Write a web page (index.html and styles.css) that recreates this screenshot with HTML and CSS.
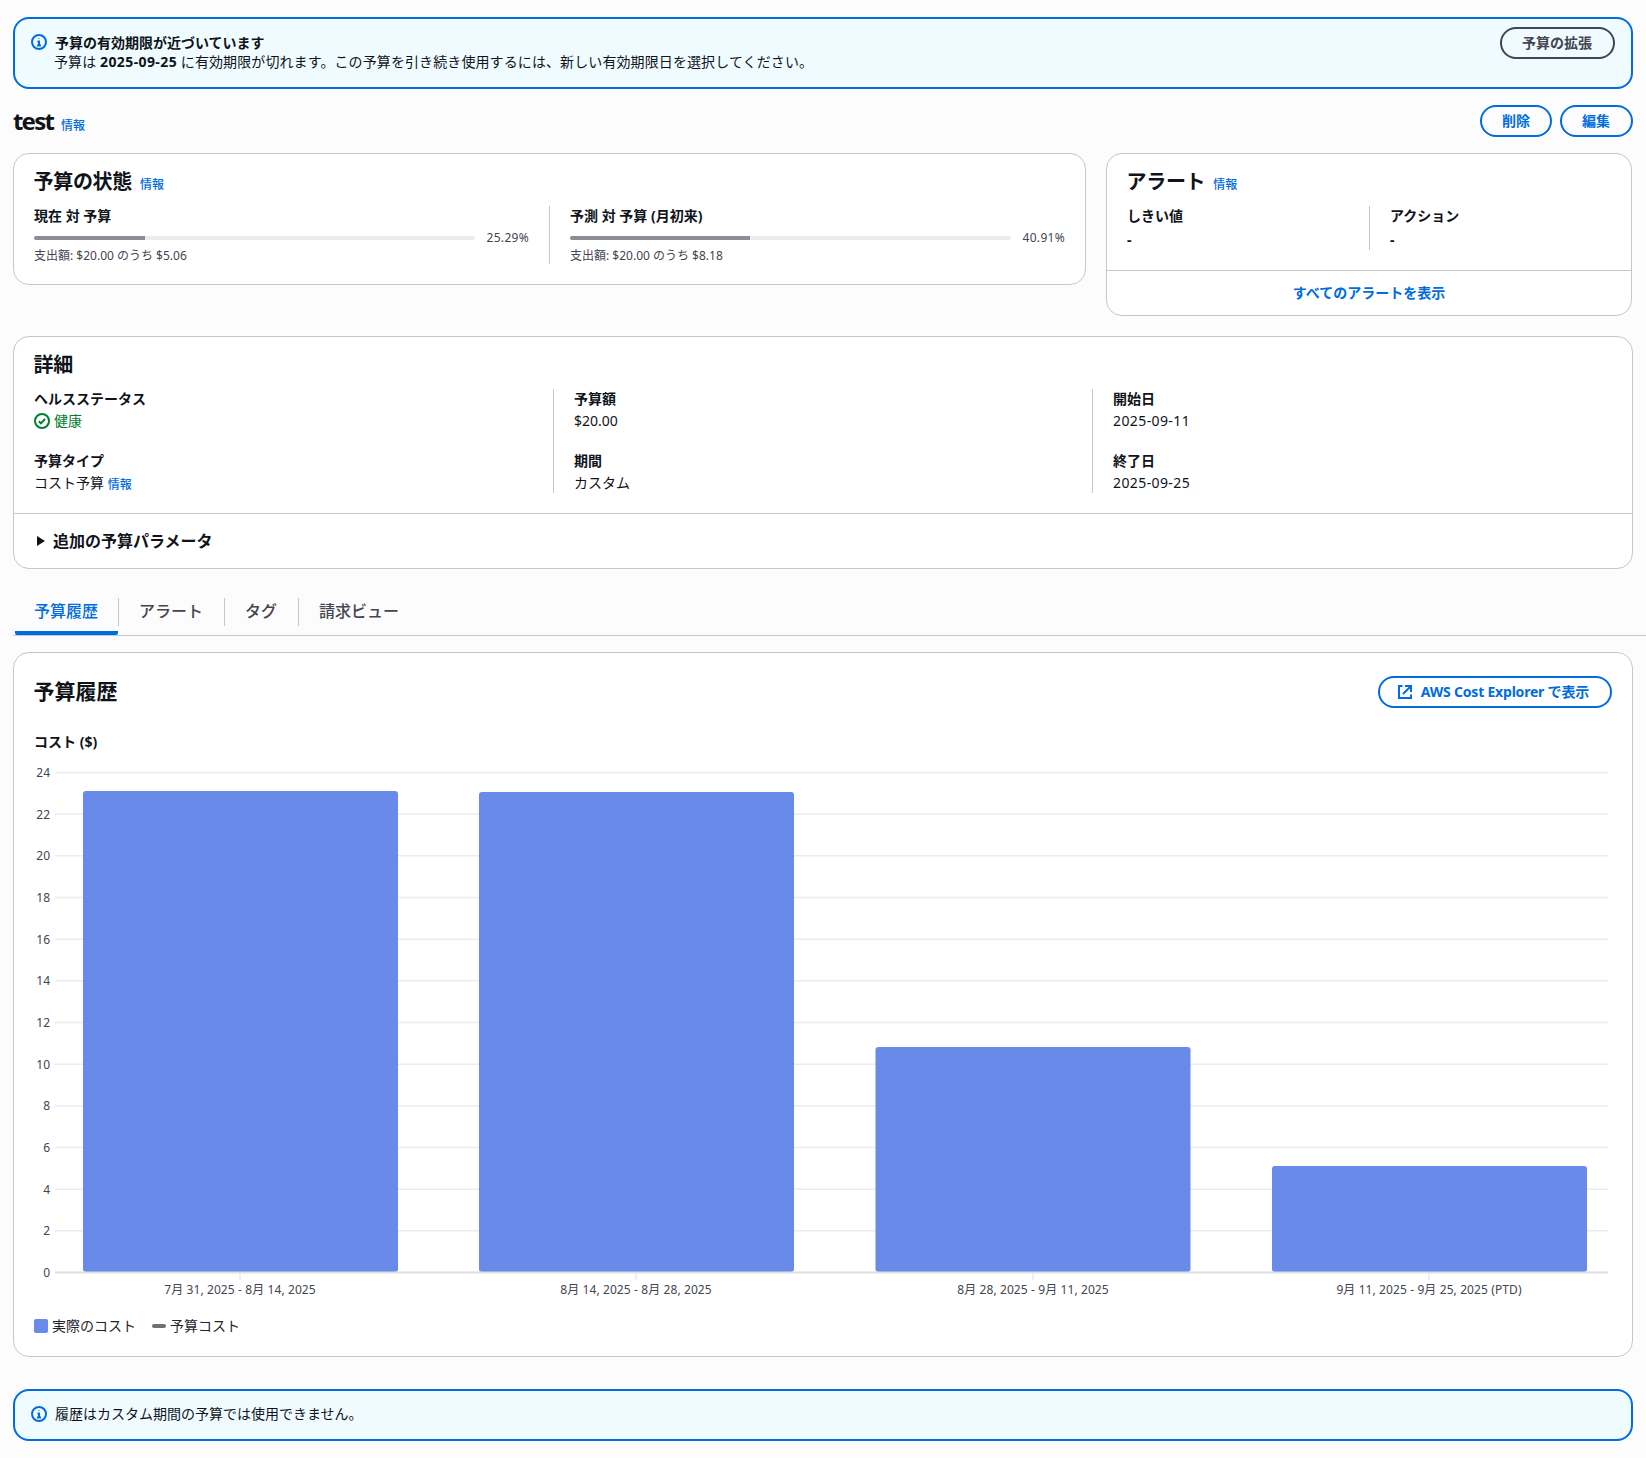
FILE: index.html
```html
<!DOCTYPE html>
<html lang="ja">
<head>
<meta charset="utf-8">
<title>test</title>
<link rel="stylesheet" href="styles.css">
</head>
<body>
<main class="page">
  <section class="flash">
    <svg class="icon flash-icon" viewBox="0 0 16 16"><circle cx="8" cy="8" r="7"/><path d="M8 11.5V7.5H6.5"/><path d="M6 11.5h4"/><path d="M8 4.4v.6"/></svg>
    <div class="flash-body">
      <div class="flash-title">予算の有効期限が近づいています</div>
      <div class="flash-text">予算は <b>2025-09-25</b> に有効期限が切れます。この予算を引き続き使用するには、新しい有効期限日を選択してください。</div>
    </div>
    <button class="btn btn-dark">予算の拡張</button>
  </section>

  <header class="page-head">
    <div class="title-wrap"><h1>test</h1><a class="info">情報</a></div>
    <div class="actions"><button class="btn">削除</button><button class="btn">編集</button></div>
  </header>

  <div class="top-grid">
    <section class="card status-card">
      <div class="title-wrap"><h2>予算の状態</h2><a class="info">情報</a></div>
      <div class="status-cols">
        <div class="status-col">
          <div class="label">現在 対 予算</div>
          <div class="progress-row"><div class="track"><div class="fill" style="width:25.29%"></div></div><span class="pct">25.29%</span></div>
          <div class="sub">支出額: $20.00 のうち $5.06</div>
        </div>
        <div class="status-col ruled">
          <div class="label">予測 対 予算 (月初来)</div>
          <div class="progress-row"><div class="track"><div class="fill" style="width:40.91%"></div></div><span class="pct">40.91%</span></div>
          <div class="sub">支出額: $20.00 のうち $8.18</div>
        </div>
      </div>
    </section>

    <section class="card alert-card">
      <div class="alert-main">
        <div class="title-wrap"><h2>アラート</h2><a class="info">情報</a></div>
        <div class="alert-cols">
          <div class="alert-col"><div class="label">しきい値</div><div class="dash">-</div></div>
          <div class="alert-col ruled"><div class="label">アクション</div><div class="dash">-</div></div>
        </div>
      </div>
      <a class="alert-foot">すべてのアラートを表示</a>
    </section>
  </div>

  <section class="card details">
    <div class="details-main">
      <h2>詳細</h2>
      <div class="details-cols">
        <div class="details-col">
          <div class="field"><div class="label">ヘルスステータス</div><div class="value ok"><svg class="icon" viewBox="0 0 16 16"><circle cx="8" cy="8" r="7"/><path d="m4.8 8.2 2.2 2.2 4-4.4"/></svg>健康</div></div>
          <div class="field"><div class="label">予算タイプ</div><div class="value">コスト予算 <a class="info">情報</a></div></div>
        </div>
        <div class="details-col ruled">
          <div class="field"><div class="label">予算額</div><div class="value">$20.00</div></div>
          <div class="field"><div class="label">期間</div><div class="value">カスタム</div></div>
        </div>
        <div class="details-col ruled">
          <div class="field"><div class="label">開始日</div><div class="value date">2025-09-11</div></div>
          <div class="field"><div class="label">終了日</div><div class="value date">2025-09-25</div></div>
        </div>
      </div>
    </div>
    <div class="expander"><span class="caret"></span>追加の予算パラメータ</div>
  </section>

  <nav class="tabs">
    <div class="tab active"><span class="tab-label">予算履歴</span></div>
    <div class="tab"><span class="tab-label">アラート</span></div>
    <div class="tab"><span class="tab-label">タグ</span></div>
    <div class="tab"><span class="tab-label">請求ビュー</span></div>
  </nav>

  <section class="card chart-card">
    <div class="chart-head">
      <h2>予算履歴</h2>
      <button class="btn btn-ext"><svg class="icon" viewBox="0 0 16 16"><path d="M14 8V2H8"/><path d="m14 2-8 8"/><path d="M5.5 2H2v12h12v-3.5"/></svg>AWS Cost Explorer で表示</button>
    </div>
    <div class="label axis-title">コスト ($)</div>
    <svg class="chart" viewBox="0 0 1578 548" width="1578" height="548">
      <g class="grid">
        <line x1="21" x2="1574" y1="12.5" y2="12.5"/>
        <line x1="21" x2="1574" y1="54.2" y2="54.2"/>
        <line x1="21" x2="1574" y1="95.8" y2="95.8"/>
        <line x1="21" x2="1574" y1="137.5" y2="137.5"/>
        <line x1="21" x2="1574" y1="179.2" y2="179.2"/>
        <line x1="21" x2="1574" y1="220.8" y2="220.8"/>
        <line x1="21" x2="1574" y1="262.5" y2="262.5"/>
        <line x1="21" x2="1574" y1="304.2" y2="304.2"/>
        <line x1="21" x2="1574" y1="345.8" y2="345.8"/>
        <line x1="21" x2="1574" y1="387.5" y2="387.5"/>
        <line x1="21" x2="1574" y1="429.2" y2="429.2"/>
        <line x1="21" x2="1574" y1="470.8" y2="470.8"/>
      </g>
      <g class="y-labels">
        <text x="16" y="17">24</text>
        <text x="16" y="59">22</text>
        <text x="16" y="100">20</text>
        <text x="16" y="142">18</text>
        <text x="16" y="184">16</text>
        <text x="16" y="225">14</text>
        <text x="16" y="267">12</text>
        <text x="16" y="309">10</text>
        <text x="16" y="350">8</text>
        <text x="16" y="392">6</text>
        <text x="16" y="434">4</text>
        <text x="16" y="475">2</text>
        <text x="16" y="517">0</text>
      </g>
      <g class="bars">
        <rect x="49" y="31" width="315" height="481" rx="3"/>
        <rect x="445" y="32" width="315" height="480" rx="3"/>
        <rect x="841.5" y="287" width="315" height="225" rx="3"/>
        <rect x="1238" y="406" width="315" height="106" rx="3"/>
      </g>
      <line class="baseline" x1="21" x2="1574" y1="512.5" y2="512.5"/>
      <g class="ticks">
        <line x1="206" x2="206" y1="513" y2="520"/>
        <line x1="602" x2="602" y1="513" y2="520"/>
        <line x1="999" x2="999" y1="513" y2="520"/>
        <line x1="1395" x2="1395" y1="513" y2="520"/>
      </g>
      <g class="x-labels">
        <text x="206" y="534">7月 31, 2025 - 8月 14, 2025</text>
        <text x="602" y="534">8月 14, 2025 - 8月 28, 2025</text>
        <text x="999" y="534">8月 28, 2025 - 9月 11, 2025</text>
        <text x="1395" y="534">9月 11, 2025 - 9月 25, 2025 (PTD)</text>
      </g>
    </svg>
    <div class="legend">
      <div class="legend-item"><span class="swatch"></span>実際のコスト</div>
      <div class="legend-item"><span class="dashmark"></span>予算コスト</div>
    </div>
  </section>

  <section class="flash flash-bottom">
    <svg class="icon flash-icon" viewBox="0 0 16 16"><circle cx="8" cy="8" r="7"/><path d="M8 11.5V7.5H6.5"/><path d="M6 11.5h4"/><path d="M8 4.4v.6"/></svg>
    <div class="flash-body">履歴はカスタム期間の予算では使用できません。</div>
  </section>
</main>
</body>
</html>
```

FILE: styles.css
```css
* { box-sizing: border-box; }

html, body { margin: 0; padding: 0; }

body {
  background: #fcfcfd;
  color: #0f141a;
  font-family: "Noto Sans", "Noto Sans CJK JP", sans-serif;
  font-size: 14px;
  line-height: 20px;
}

.page { padding: 17px 13px 17px; }

h1, h2 { margin: 0; font-weight: 700; }
h1 { font-size: 24px; line-height: 30px; letter-spacing: -1.8px; }
h2 { font-size: 20px; line-height: 24px; letter-spacing: -0.3px; margin-left: -0.5px; }

.icon {
  width: 16px;
  height: 16px;
  flex: none;
  fill: none;
  stroke: currentColor;
  stroke-width: 2;
}

/* flash */
.flash {
  display: flex;
  gap: 8px;
  height: 72px;
  padding: 14px 16px 13px 16px;
  background: #f0fbff;
  border: 2px solid #006ce0;
  border-radius: 16px;
}
.flash-icon { color: #006ce0; margin-top: 1px; }
.flash-body { flex: 1; }
.flash-title { font-weight: 700; line-height: 19px; }
.flash-text { letter-spacing: 0.1px; margin-left: -1px; }
.flash-text b { letter-spacing: 0.4px; }
.flash .btn-dark { margin: -6px 0 0 0; padding-right: 21px; }
.flash-bottom { height: 52px; margin-top: 32px; padding-top: 13px; }
.flash-bottom .flash-icon { margin-top: 2px; }

/* buttons */
.btn {
  height: 32px;
  padding: 0 20px;
  background: transparent;
  border: 2px solid #006ce0;
  border-radius: 20px;
  color: #006ce0;
  font: 700 14px/20px "Noto Sans", "Noto Sans CJK JP", sans-serif;
  white-space: nowrap;
}
.btn-dark { border-color: #424650; color: #424650; }
.btn-ext {
  display: flex;
  align-items: center;
  gap: 8px;
  padding: 0 21px 0 17px;
  background: #fff;
  letter-spacing: -0.2px;
}

/* header */
.page-head {
  display: flex;
  justify-content: space-between;
  align-items: center;
  height: 32px;
  margin-top: 16px;
}
.title-wrap { display: flex; align-items: baseline; gap: 8px; }
.actions { display: flex; gap: 8px; }
.actions .btn:last-child { padding-right: 21px; }
.info { color: #006ce0; font-size: 12px; font-weight: 500; line-height: 16px; }

/* cards */
.card {
  background: #fff;
  border: 1px solid #c6c6cd;
  border-radius: 16px;
}

.top-grid {
  display: grid;
  grid-template-columns: 1073px 526px;
  gap: 20px;
  align-items: start;
  margin-top: 16px;
}

.label { font-weight: 700; }
.ruled { border-left: 1px solid #c6c6cd; }

.status-card { padding: 16px 20px 20px; }
.status-cols { display: grid; grid-template-columns: 515px 1fr; margin-top: 12px; }
.status-col { height: 58px; padding-right: 20px; }
.status-col.ruled { padding: 0 0 0 20px; }
.progress-row { display: flex; align-items: center; gap: 12px; height: 16px; margin-top: 4px; }
.track { flex: 1; height: 4px; background: #ebebf0; border-radius: 2px; overflow: hidden; }
.fill { height: 100%; background: #8c8c94; }
.pct { font-size: 12px; line-height: 16px; color: #424650; letter-spacing: 0.3px; }
.sub { font-size: 12px; line-height: 16px; color: #424650; margin-top: 2px; }

.alert-main { padding: 16px 20px 20px; }
.alert-cols { display: grid; grid-template-columns: 242px 1fr; margin-top: 12px; }
.alert-col { height: 44px; }
.alert-col.ruled { padding-left: 20px; }
.dash { margin-top: 4px; font-weight: 700; line-height: 20px; }
.alert-foot {
  display: block;
  height: 45px;
  border-top: 1px solid #c6c6cd;
  padding-top: 12px;
  text-align: center;
  color: #006ce0;
  font-weight: 700;
}

/* details */
.details { margin-top: 20px; }
.details-main { padding: 16px 20px 20px; border-bottom: 1px solid #c6c6cd; }
.details-cols { display: grid; grid-template-columns: 519px 539px 1fr; margin-top: 12px; }
.details-col { display: flex; flex-direction: column; gap: 20px; }
.details-col.ruled { padding-left: 20px; }
.value { margin-top: 2px; white-space: pre; }
.value .info { vertical-align: -1px; }
.date { letter-spacing: 0.4px; }
.ok { display: flex; align-items: center; gap: 4px; color: #00802f; }
.expander {
  display: flex;
  align-items: center;
  height: 54px;
  padding-left: 23px;
  font-size: 16px;
  font-weight: 700;
}
.caret {
  width: 0;
  height: 0;
  margin-right: 8px;
  border-left: 8px solid #0f141a;
  border-top: 5px solid transparent;
  border-bottom: 5px solid transparent;
}

/* tabs */
.tabs {
  display: flex;
  margin: 29px -13px 0 0;
  border-bottom: 1px solid #c6c6cd;
  height: 38px;
}
.tab { height: 37px; padding-bottom: 9px; }
.tab-label {
  display: block;
  height: 28px;
  padding: 0 21px 0 20px;
  border-left: 1px solid #c6c6cd;
  color: #424650;
  font-size: 16px;
  font-weight: 500;
  line-height: 27px;
}
.tab.active {
  margin-left: 2px;
  padding-bottom: 5px;
  border-bottom: 4px solid #006ce0;
  border-radius: 0 0 2px 2px;
}
.tab.active .tab-label {
  border-left: 0;
  padding: 0 20px 0 19px;
  color: #006ce0;
}

/* chart */
.chart-card { margin-top: 16px; padding: 23px 20px 20px; }
.chart-head { display: flex; justify-content: space-between; align-items: center; }
.chart-head h2 { font-size: 21px; padding-bottom: 3px; letter-spacing: 0; }
.axis-title { margin-top: 24px; }
.chart { display: block; margin-top: 8px; }
.grid line { stroke: #ebebf0; stroke-width: 1.4; }
.baseline { stroke: #dedee3; stroke-width: 2; }
.ticks line { stroke: #dedee3; stroke-width: 1; }
.bars rect { fill: #688ae8; }
.y-labels text { font-size: 12px; fill: #424650; text-anchor: end; }
.x-labels text { font-size: 12px; fill: #424650; text-anchor: middle; letter-spacing: 0.1px; }
.legend { display: flex; gap: 16px; margin-top: 8px; color: #1f242c; }
.legend-item { display: flex; align-items: center; gap: 4px; }
.swatch { width: 14px; height: 14px; background: #688ae8; border-radius: 2px; }
.dashmark { width: 14px; height: 4px; background: #6f6f78; border-radius: 2px; }
```
